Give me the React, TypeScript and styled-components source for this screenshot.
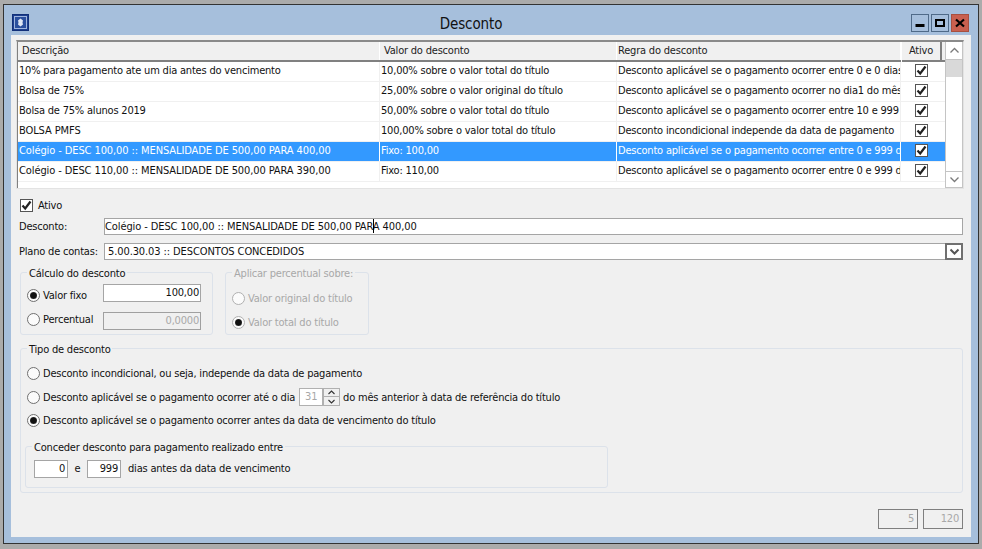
import React from "react";
import styled, { createGlobalStyle } from "styled-components";

const Global = createGlobalStyle`
  html, body { margin: 0; padding: 0; background: #ababab; }
  body { font-family: "DejaVu Sans", "Liberation Sans", sans-serif; font-stretch: condensed; font-size: 11px; letter-spacing: -0.2px; color: #111; }
  * { box-sizing: border-box; }
`;

const Screen = styled.div`
  width: 982px; height: 549px; padding: 4px 3px 5px 3px; background: #ababab; overflow: hidden;
`;
const Win = styled.div`
  width: 976px; height: 540px; border: 1px solid #333; background: #a6bfdc; display: flex; flex-direction: column; padding: 0 7px 6px 7px;
`;
const TitleBar = styled.div`
  height: 30px; display: flex; align-items: flex-start; position: relative; padding-top: 9px;
`;
const AppIcon = styled.svg`
  width: 17px; height: 17px; margin-left: 1px; display: block;
`;
const Title = styled.div`
  position: absolute; left: 0; right: 40px; top: 10px; text-align: center; font-size: 15px; line-height: 18px; color: #111; letter-spacing: -0.1px;
`;
const WinBtns = styled.div`
  margin-left: auto; display: flex; gap: 2px; margin-right: 2px;
`;
const WinBtn = styled.div<{ $close?: boolean }>`
  width: 18px; height: 18px; border: 1px solid ${p => (p.$close ? "#a8503f" : "#4f6a88")};
  background: ${p => (p.$close ? "#c9604f" : "#a6bfdc")}; display: flex; align-items: center; justify-content: center;
`;
const Content = styled.div`
  flex: 1; background: #f0f0f0; padding: 5px 7px 8px 5px; display: flex; flex-direction: column;
`;
const GridFrame = styled.div`
  height: 149px; width: 948px; border: 1px solid #e3e3e3; border-top: 2px solid #8a8a8a; display: flex;
`;
const GridBody = styled.div`
  width: 928px; background: #fff; border-left: 1px solid #808080; display: flex; flex-direction: column;
`;
const HeadRow = styled.div`
  height: 20px; display: flex; background: #f0f0f0; border-bottom: 2px solid #808080;
`;
const HeadCell = styled.div<{ $w: number; $center?: boolean; $pad?: number }>`
  width: ${p => p.$w}px; padding-left: ${p => (p.$center ? 0 : p.$pad ?? 4)}px; line-height: 17px; text-align: ${p => (p.$center ? "center" : "left")};
  border-right: 1px solid #fff; color: #222; white-space: nowrap;
`;
const AtivoHead = styled(HeadCell)`
  border-left: 1px solid #fff; border-right: 2px solid #808080; height: 20px;
`;
const Row = styled.div<{ $sel?: boolean }>`
  height: 20px; display: flex; background: ${p => (p.$sel ? "#3399ff" : "#fff")}; color: ${p => (p.$sel ? "#fff" : "#111")};
  border-bottom: 1px solid #f0f0f0;
`;
const Cell = styled.div<{ $w: number; $sel?: boolean; $upper?: boolean }>`
  width: ${p => p.$w}px; padding-left: 1px; line-height: 18px; overflow: hidden; white-space: nowrap;
  border-right: 1px solid ${p => (p.$sel ? "#fff" : "#f0f0f0")};
  letter-spacing: ${p => (p.$upper ? "-0.1px" : "-0.2px")};
`;
const CheckCell = styled.div<{ $sel?: boolean }>`
  width: 40px; display: flex; align-items: flex-start; justify-content: center; padding-top: 2px;
  background: ${p => (p.$sel ? "#3399ff" : "#fff")};
`;
const Check = styled.div`
  width: 13px; height: 13px; border: 1px solid #555; background: #fff; display: flex; align-items: center; justify-content: center; flex: none;
`;
const Scroll = styled.div`
  width: 18px; background: #fff; border-left: 1px solid #c4c4c4; border-right: 1px solid #c4c4c4; display: flex; flex-direction: column;
`;
const ScrollBtn = styled.div<{ $boxed?: boolean }>`
  height: 17px; display: flex; align-items: center; justify-content: center; background: #fff; flex: none;
  ${p => (p.$boxed ? "border-top: 1px solid #c4c4c4; border-bottom: 1px solid #c4c4c4;" : "")}
`;
const Thumb = styled.div`
  height: 18px; background: #d9d9d9; border-top: 1px solid #c4c4c4;
`;
const ScrollGap = styled.div`
  flex: 1; background: #fff;
`;
const AtivoLine = styled.label`
  display: flex; align-items: center; gap: 5px; margin: 10px 0 0 4px; height: 13px; line-height: 13px;
`;
const FieldRow = styled.div<{ $top: number }>`
  display: flex; align-items: center; margin-top: ${p => p.$top}px; height: 17px; padding-left: 3px; width: 948px;
`;
const FieldLabel = styled.div`
  width: 85px; flex: none; white-space: nowrap;
`;
const TextBox = styled.div`
  width: 859px; height: 17px; border: 1px solid #a5a5a5; background: #fff; line-height: 15px; white-space: nowrap; position: relative; letter-spacing: -0.1px;
`;
const Caret = styled.span`
  position: absolute; left: 268px; top: 0; width: 1px; height: 14px; background: #000;
`;
const ComboBox = styled.div`
  width: 859px; height: 17px; border: 1px solid #a5a5a5; background: #fff; line-height: 15px; padding-left: 3px; white-space: nowrap; position: relative; letter-spacing: -0.1px;
`;
const ComboBtn = styled.div`
  position: absolute; right: -1px; top: -1px; width: 18px; height: 17px; border: 2px solid #707070; background: #fff; display: flex; align-items: center; justify-content: center;
`;
const Groups = styled.div`
  display: flex; gap: 12px; margin: 12px 0 0 4px; height: 63px;
`;
const Group = styled.div<{ $w: number; $h?: number }>`
  position: relative; width: ${p => p.$w}px; height: ${p => p.$h ?? 63}px; border: 1px solid #dce2ea; border-radius: 3px;
`;
const Legend = styled.div<{ $off?: boolean }>`
  position: absolute; left: 6px; top: -6px; padding: 0 2px; background: #f0f0f0; line-height: 13px; white-space: nowrap;
  color: ${p => (p.$off ? "#a8a8a8" : "#111")};
`;
const RadioCircle = styled.span<{ $on?: boolean; $off?: boolean }>`
  width: 13px; height: 13px; border-radius: 50%; border: 1px solid ${p => (p.$off ? "#b0b0b0" : "#707070")}; background: #fbfbfb; flex: none; display: flex; align-items: center; justify-content: center;
  &::after { content: ""; width: 7px; height: 7px; border-radius: 50%; background: ${p => (p.$on ? "radial-gradient(circle, #111 50%, #555 100%)" : "transparent")}; }
`;
const RadioRow = styled.div<{ $off?: boolean; $shift?: number }>`
  display: flex; align-items: center; gap: 3px; height: 13px; line-height: 13px; white-space: nowrap; color: ${p => (p.$off ? "#a8a8a8" : "#111")};
  margin-top: ${p => p.$shift ?? 0}px;
`;
const CalcBody = styled.div`
  display: grid; grid-template-columns: 76px 98px; row-gap: 10px; padding: 10px 0 0 6px; align-items: center;
`;
const NumBox = styled.div<{ $off?: boolean }>`
  height: 18px; border: 1px solid ${p => (p.$off ? "#a0a0a0" : "#a5a5a5")}; background: ${p => (p.$off ? "#f0f0f0" : "#fff")};
  color: ${p => (p.$off ? "#a8a8a8" : "#111")}; text-align: right; padding-right: 1px; line-height: 15px;
`;
const ApplyBody = styled.div`
  display: flex; flex-direction: column; gap: 11px; padding: 19px 0 0 6px;
`;
const TipoGroup = styled(Group)`
  margin: 13px 0 0 4px; padding: 18px 0 0 6px;
`;
const Radios = styled.div`
  display: flex; flex-direction: column; gap: 10.5px;
`;
const Spin = styled.div`
  display: flex; width: 41px; height: 18px; border: 1px solid #b0b0b0; margin: 0 0 0 1px; background: #fff;
`;
const SpinText = styled.div`
  flex: 1; color: #a8a8a8; padding-left: 5px; line-height: 15px;
`;
const SpinBtns = styled.div`
  width: 17px; display: flex; flex-direction: column; justify-content: space-between; background: #f0f0f0; border-left: 2px solid #b0b0b0;
`;
const SpinBtn = styled.div<{ $up?: boolean }>`
  height: 8px; display: flex; align-items: center; justify-content: center;
  ${p => (p.$up ? "border-bottom: 1px solid #b0b0b0;" : "")}
`;
const Conceder = styled(Group)`
  margin: 19px 0 0 -2px; padding: 13px 0 0 8px; display: flex; align-items: flex-start;
`;
const SmallBox = styled.div`
  width: 34px; height: 18px; border: 1px solid #a5a5a5; background: #fff; text-align: right; padding-right: 2px; line-height: 15px; flex: none;
`;
const Conj = styled.div`
  width: 19px; text-align: center; line-height: 17px;
`;
const DaysText = styled.div`
  margin-left: 7px; line-height: 17px;
`;
const Footer = styled.div`
  display: flex; justify-content: flex-end; gap: 5px; margin: 16px 0 0 0; padding-right: 1px; width: 948px;
`;
const CountBox = styled.div`
  width: 40px; height: 20px; border: 1px solid #7f7f7f; color: #a8a8a8; text-align: right; padding-right: 3px; line-height: 18px;
`;

const Tick = () => (
  <svg width="11" height="11" viewBox="0 0 11 11">
    <path d="M1.5 5.5 L4.2 8.5 L9.5 1.5" fill="none" stroke="#222" strokeWidth="2.2" />
  </svg>
);
const Chev = ({ up, bold }: { up?: boolean; bold?: boolean }) => (
  <svg width="11" height="7" viewBox="0 0 11 7">
    <path d={up ? "M1.5 5.5 L5.5 1.5 L9.5 5.5" : "M1.5 1.5 L5.5 5.5 L9.5 1.5"} fill="none" stroke={bold ? "#555" : "#7a7a7a"} strokeWidth={bold ? 2 : 1.3} />
  </svg>
);
const SmallChev = ({ up }: { up?: boolean }) => (
  <svg width="7" height="5" viewBox="0 0 7 5">
    <path d={up ? "M0.5 4 L3.5 1 L6.5 4" : "M0.5 1 L3.5 4 L6.5 1"} fill="none" stroke="#333" strokeWidth="1.1" />
  </svg>
);

const rows = [
  ["10% para pagamento ate um dia antes do vencimento", "10,00% sobre o valor total do título", "Desconto aplicável se o pagamento ocorrer entre 0 e 0 dias"],
  ["Bolsa de 75%", "25,00% sobre o valor original do título", "Desconto aplicável se o pagamento ocorrer no dia1 do mês"],
  ["Bolsa de 75% alunos 2019", "50,00% sobre o valor total do título", "Desconto aplicável se o pagamento ocorrer entre 10 e 999"],
  ["BOLSA PMFS", "100,00% sobre o valor total do título", "Desconto incondicional independe da data de pagamento"],
  ["Colégio - DESC 100,00 :: MENSALIDADE DE 500,00 PARA 400,00", "Fixo: 100,00", "Desconto aplicável se o pagamento ocorrer entre 0 e 999 dias"],
  ["Colégio - DESC 110,00 :: MENSALIDADE DE 500,00 PARA 390,00", "Fixo: 110,00", "Desconto aplicável se o pagamento ocorrer entre 0 e 999 dias"],
];

export default function App() {
  return (
    <Screen>
      <Global />
      <Win>
        <TitleBar>
          <AppIcon viewBox="0 0 17 17">
            <rect x="0.5" y="0.5" width="16" height="16" fill="#1c3f8f" stroke="#12307a" />
            <rect x="2.5" y="2.5" width="12" height="12" fill="#2a4f9e" stroke="#9fb4de" />
            <path d="M8.5 4.5 L11 6.5 L10.5 8.5 L11 10.5 L8.5 12.5 L6 10.5 L6.5 8.5 L6 6.5 Z" fill="#dfe6f4" />
          </AppIcon>
          <Title>Desconto</Title>
          <WinBtns>
            <WinBtn>
              <svg width="10" height="10" viewBox="0 0 10 10"><rect x="0.5" y="6" width="9" height="3" fill="#000" /></svg>
            </WinBtn>
            <WinBtn>
              <svg width="10" height="10" viewBox="0 0 10 10"><rect x="1" y="2" width="8" height="6" fill="none" stroke="#000" strokeWidth="2" /></svg>
            </WinBtn>
            <WinBtn $close>
              <svg width="10" height="10" viewBox="0 0 10 10"><path d="M1 1.5 L9 8.5 M9 1.5 L1 8.5" stroke="#000" strokeWidth="2.2" /></svg>
            </WinBtn>
          </WinBtns>
        </TitleBar>
        <Content>
          <GridFrame>
            <GridBody>
              <HeadRow>
                <HeadCell $w={362}>Descrição</HeadCell>
                <HeadCell $w={237}>Valor do desconto</HeadCell>
                <HeadCell $w={284} $pad={1}>Regra do desconto</HeadCell>
                <AtivoHead $w={41} $center>Ativo</AtivoHead>
              </HeadRow>
              {rows.map((r, i) => (
                <Row key={i} $sel={i === 4}>
                  <Cell $w={362} $sel={i === 4} $upper={i >= 3}>{r[0]}</Cell>
                  <Cell $w={237} $sel={i === 4}>{r[1]}</Cell>
                  <Cell $w={284} $sel={i === 4}>{r[2]}</Cell>
                  <CheckCell $sel={i === 4}><Check><Tick /></Check></CheckCell>
                </Row>
              ))}
            </GridBody>
            <Scroll>
              <ScrollBtn><Chev up /></ScrollBtn>
              <Thumb />
              <ScrollGap />
              <ScrollBtn $boxed><Chev /></ScrollBtn>
            </Scroll>
          </GridFrame>
          <AtivoLine><Check><Tick /></Check>Ativo</AtivoLine>
          <FieldRow $top={6}>
            <FieldLabel>Desconto:</FieldLabel>
            <TextBox>Colégio - DESC 100,00 :: MENSALIDADE DE 500,00 PARA 400,00<Caret /></TextBox>
          </FieldRow>
          <FieldRow $top={8}>
            <FieldLabel>Plano de contas:</FieldLabel>
            <ComboBox>5.00.30.03 :: DESCONTOS CONCEDIDOS<ComboBtn><Chev bold /></ComboBtn></ComboBox>
          </FieldRow>
          <Groups>
            <Group $w={193}>
              <Legend>Cálculo do desconto</Legend>
              <CalcBody>
                <RadioRow $shift={6}><RadioCircle $on />Valor fixo</RadioRow>
                <NumBox>100,00</NumBox>
                <RadioRow $shift={-4}><RadioCircle />Percentual</RadioRow>
                <NumBox $off>0,0000</NumBox>
              </CalcBody>
            </Group>
            <Group $w={144}>
              <Legend $off>Aplicar percentual sobre:</Legend>
              <ApplyBody>
                <RadioRow $off><RadioCircle $off />Valor original do título</RadioRow>
                <RadioRow $off><RadioCircle $off $on />Valor total do título</RadioRow>
              </ApplyBody>
            </Group>
          </Groups>
          <TipoGroup $w={943} $h={145}>
            <Legend>Tipo de desconto</Legend>
            <Radios>
              <RadioRow><RadioCircle />Desconto incondicional, ou seja, independe da data de pagamento</RadioRow>
              <RadioRow>
                <RadioCircle />Desconto aplicável se o pagamento ocorrer até o dia
                <Spin>
                  <SpinText>31</SpinText>
                  <SpinBtns>
                    <SpinBtn $up><SmallChev up /></SpinBtn>
                    <SpinBtn><SmallChev /></SpinBtn>
                  </SpinBtns>
                </Spin>
                do mês anterior à data de referência do título
              </RadioRow>
              <RadioRow><RadioCircle $on />Desconto aplicável se o pagamento ocorrer antes da data de vencimento do título</RadioRow>
            </Radios>
            <Conceder $w={583} $h={42}>
              <Legend>Conceder desconto para pagamento realizado entre</Legend>
              <SmallBox>0</SmallBox>
              <Conj>e</Conj>
              <SmallBox>999</SmallBox>
              <DaysText>dias antes da data de vencimento</DaysText>
            </Conceder>
          </TipoGroup>
          <Footer>
            <CountBox>5</CountBox>
            <CountBox>120</CountBox>
          </Footer>
        </Content>
      </Win>
    </Screen>
  );
}
